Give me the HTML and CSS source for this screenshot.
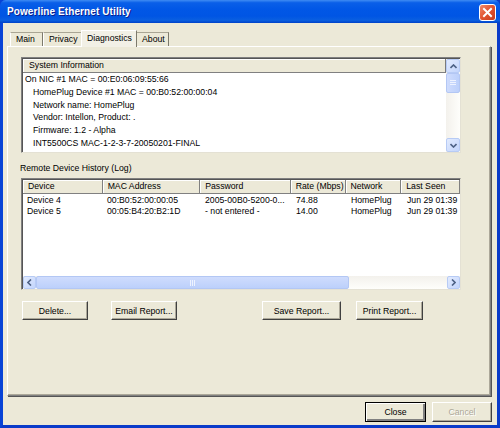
FILE: index.html
```html
<!DOCTYPE html>
<html>
<head>
<meta charset="utf-8">
<link rel="stylesheet" href="styles.css">
</head>
<body>
<div class="window">
  <div class="titlebar">
    <span class="title">Powerline Ethernet Utility</span>
    <span class="close-x"><svg width="11" height="11" viewBox="0 0 11 11"><path d="M2 2 L9 9 M9 2 L2 9" stroke="#fff" stroke-width="2" stroke-linecap="square"/></svg></span>
  </div>
  <div class="client">
    <div class="tabs">
      <div class="tab">Main</div>
      <div class="tab">Privacy</div>
      <div class="tab active">Diagnostics</div>
      <div class="tab">About</div>
    </div>
    <div class="panel">
      <div class="listbox sysinfo">
        <div class="lb-main">
          <div class="hdr"><div class="hcell wide">System Information</div></div>
          <div class="lines">
            <div>On NIC #1 MAC = 00:E0:06:09:55:66</div>
            <div class="ind">HomePlug Device #1 MAC = 00:B0:52:00:00:04</div>
            <div class="ind">Network name: HomePlug</div>
            <div class="ind">Vendor: Intellon, Product: .</div>
            <div class="ind">Firmware: 1.2 - Alpha</div>
            <div class="ind">INT5500CS MAC-1-2-3-7-20050201-FINAL</div>
          </div>
        </div>
        <div class="vscroll">
          <div class="sbtn"><svg width="7" height="5" viewBox="0 0 7 5"><path d="M0.5 4 L3.5 1 L6.5 4" fill="none" stroke="#4d6185" stroke-width="1.6"/></svg></div>
          <div class="vthumb"><span class="grip"></span></div>
          <div class="vtrack"></div>
          <div class="sbtn"><svg width="7" height="5" viewBox="0 0 7 5"><path d="M0.5 1 L3.5 4 L6.5 1" fill="none" stroke="#4d6185" stroke-width="1.6"/></svg></div>
        </div>
      </div>
      <div class="grouplabel">Remote Device History (Log)</div>
      <div class="listbox history">
        <div class="hdr">
          <div class="hcell c1">Device</div>
          <div class="hcell c2">MAC Address</div>
          <div class="hcell c3">Password</div>
          <div class="hcell c4">Rate (Mbps)</div>
          <div class="hcell c5">Network</div>
          <div class="hcell c6">Last Seen</div>
        </div>
        <div class="rows">
          <div class="row"><span class="c1">Device 4</span><span class="c2">00:B0:52:00:00:05</span><span class="c3">2005-00B0-5200-0...</span><span class="c4">74.88</span><span class="c5">HomePlug</span><span class="c6">Jun 29 01:39</span></div>
          <div class="row"><span class="c1">Device 5</span><span class="c2">00:05:B4:20:B2:1D</span><span class="c3">- not entered -</span><span class="c4">14.00</span><span class="c5">HomePlug</span><span class="c6">Jun 29 01:39</span></div>
        </div>
        <div class="hscroll">
          <div class="sbtn"><svg width="5" height="7" viewBox="0 0 5 7"><path d="M4 0.5 L1 3.5 L4 6.5" fill="none" stroke="#4d6185" stroke-width="1.6"/></svg></div>
          <div class="hthumb"><span class="hgrip"></span></div>
          <div class="htrack"></div>
          <div class="sbtn"><svg width="5" height="7" viewBox="0 0 5 7"><path d="M1 0.5 L4 3.5 L1 6.5" fill="none" stroke="#4d6185" stroke-width="1.6"/></svg></div>
        </div>
      </div>
      <div class="actions">
        <button class="btn b-del">Delete...</button>
        <button class="btn b-email">Email Report...</button>
        <button class="btn b-save">Save Report...</button>
        <button class="btn b-print">Print Report...</button>
      </div>
    </div>
    <div class="footer">
      <button class="btn default">Close</button>
      <button class="btn disabled">Cancel</button>
    </div>
  </div>
</div>
</body>
</html>
```
FILE: styles.css
```css
* { box-sizing: border-box; }
body {
  margin: 0;
  width: 500px;
  height: 428px;
  overflow: hidden;
  font-family: "Liberation Sans", Arial, sans-serif;
  font-size: 8.7px;
  color: #000;
}
.window {
  width: 500px;
  height: 428px;
  display: flex;
  flex-direction: column;
  background: #0a4fe0;
  border-left: 3px solid #0843d6;
  border-right: 3px solid #0a3bc9;
  border-bottom: 3px solid #0a3bc9;
}
.titlebar {
  height: 23px;
  margin: 0 -3px;
  padding: 0 4px 0 7px;
  display: flex;
  align-items: center;
  justify-content: space-between;
  border-radius: 6px 6px 0 0;
  background: linear-gradient(#3f8cf3 0%, #0a5fe8 12%, #0157e6 40%, #0055e4 70%, #0a5fe0 88%, #0041c8 100%);
}
.title {
  color: #fff;
  font-weight: bold;
  font-size: 10px;
  text-shadow: 1px 1px #0a1e8c;
  letter-spacing: 0.1px;
}
.close-x {
  width: 17px;
  height: 17px;
  margin-top: 1px;
  display: flex;
  align-items: center;
  justify-content: center;
  border: 1px solid #fff;
  border-radius: 3px;
  background: linear-gradient(135deg, #f08a6c, #e1532f 50%, #c63c1c);
}
.client {
  flex: 1;
  background: #ece9d8;
  display: flex;
  flex-direction: column;
  padding: 7px 0 0 4px;
}
.tabs {
  display: flex;
  align-items: flex-end;
  height: 16px;
  margin-left: 3px;
  position: relative;
  z-index: 1;
}
.tab {
  height: 14px;
  line-height: 13px;
  padding: 0 5px;
  border: 1px solid #a9a594;
  border-bottom: none;
  border-right-color: #7d7a6c;
  border-left-color: #fff;
  background: #ece9d8;
}
.tab:first-child { width: 33px; }
.tab:nth-child(2) { width: 39px; }
.tab:nth-child(4) { width: 33px; }
.tab.active {
  height: 17px;
  width: 56px;
  line-height: 14px;
  margin: 0 -1px;
  margin-bottom: -1px;
  background: #f2f0e6;
  border-left-color: #fff;
  border-top-color: #fff;
  border-right-color: #7d7a6c;
  position: relative;
  z-index: 2;
}
.panel {
  width: 484px;
  height: 350px;
  border: 1px solid #fff;
  border-right-color: #808080;
  border-bottom-color: #808080;
  box-shadow: inset -1px -1px #aca899, 1px 1px #555;
  padding: 10px 0 0 13px;
  display: flex;
  flex-direction: column;
}
.listbox {
  width: 440px;
  background: #fff;
  border: 1px solid #808080;
  border-right-color: #e4e1d4;
  border-bottom-color: #e4e1d4;
  box-shadow: inset 1px 1px #555;
}
.sysinfo {
  height: 96px;
  display: flex;
  padding: 1px 0 0 1px;
}
.lb-main { flex: 1; display: flex; flex-direction: column; }
.hdr {
  display: flex;
  height: 14px;
  background: #ece9d8;
}
.hcell {
  height: 14px;
  line-height: 13px;
  padding-left: 5px;
  border-right: 1px solid #808080;
  border-bottom: 1px solid #808080;
  box-shadow: inset 1px 1px #fff;
  white-space: nowrap;
}
.hcell.wide { flex: 1; padding-left: 6px; border-right-color: #7a7a7a; }
.lines { padding: 0 0 0 2px; line-height: 12.8px; }
.lines .ind { padding-left: 8px; }
.vscroll {
  width: 14px;
  display: flex;
  flex-direction: column;
  background: linear-gradient(90deg, #f3f1ec, #fefefb);
}
.sbtn {
  width: 14px;
  height: 14px;
  flex: none;
  display: flex;
  align-items: center;
  justify-content: center;
  border: 1px solid #b7cbf5;
  border-radius: 2px;
  background: linear-gradient(135deg, #e2ebfe, #c3d5fc);
}
.vthumb {
  height: 20px;
  border: 1px solid #b3c7f4;
  border-radius: 2px;
  background: linear-gradient(90deg, #cfdcfd, #bcd0fb);
  display: flex;
  align-items: center;
  justify-content: center;
}
.grip {
  width: 6px;
  height: 6px;
  background: linear-gradient(#eef3ff 0 1px, transparent 1px 2px);
  background-size: 6px 2px;
}
.vtrack { flex: 1; }
.grouplabel {
  margin: 8px 0 0 -1px;
  height: 17px;
  line-height: 14px;
}
.history {
  height: 112px;
  display: flex;
  flex-direction: column;
  padding: 1px 0 0 1px;
}
.c1 { width: 80px; }
.c2 { width: 98px; }
.c3 { width: 91px; }
.c4 { width: 55px; }
.c5 { width: 56px; }
.c6 { width: 59px; }
.rows { flex: 1; padding-top: 1px; }
.row { display: flex; height: 11.3px; line-height: 11px; white-space: nowrap; }
.row span { padding-left: 4px; overflow: hidden; flex: none; }
.hscroll {
  height: 13px;
  display: flex;
  background: linear-gradient(#f3f1ec, #fefefb);
}
.hscroll .sbtn { width: 13px; height: 13px; }
.hthumb {
  width: 313px;
  border: 1px solid #b3c7f4;
  border-radius: 2px;
  background: linear-gradient(#cfdcfd, #bcd0fb);
  display: flex;
  align-items: center;
  justify-content: center;
}
.hgrip {
  width: 6px;
  height: 6px;
  background: linear-gradient(90deg, #eef3ff 0 1px, transparent 1px 2px);
  background-size: 2px 6px;
}
.htrack { flex: 1; }
.actions {
  display: flex;
  margin-top: 11px;
}
.btn {
  font-family: "Liberation Sans", Arial, sans-serif;
  font-size: 8.7px;
  color: #000;
  height: 19px;
  padding: 0;
  background: #ece9d8;
  border: 1px solid #fff;
  border-right-color: #404040;
  border-bottom-color: #404040;
  box-shadow: inset -1px -1px #aca899;
  border-radius: 0;
}
.b-del { width: 66px; margin-left: 1px; }
.b-email { width: 66px; margin-left: 23px; }
.b-save { width: 79px; margin-left: 85px; }
.b-print { width: 67px; margin-left: 15px; }
.footer {
  display: flex;
  justify-content: flex-end;
  margin: 6px 5px 0 0;
}
.footer .btn { width: 61px; height: 20px; }
.footer .default {
  border: 1px solid #000;
  box-shadow: inset 1px 1px #fff, inset -2px -2px #808080;
  margin-right: 6px;
}
.footer .disabled { width: 60px; color: #aca899; text-shadow: 1px 1px #fff; }
```
